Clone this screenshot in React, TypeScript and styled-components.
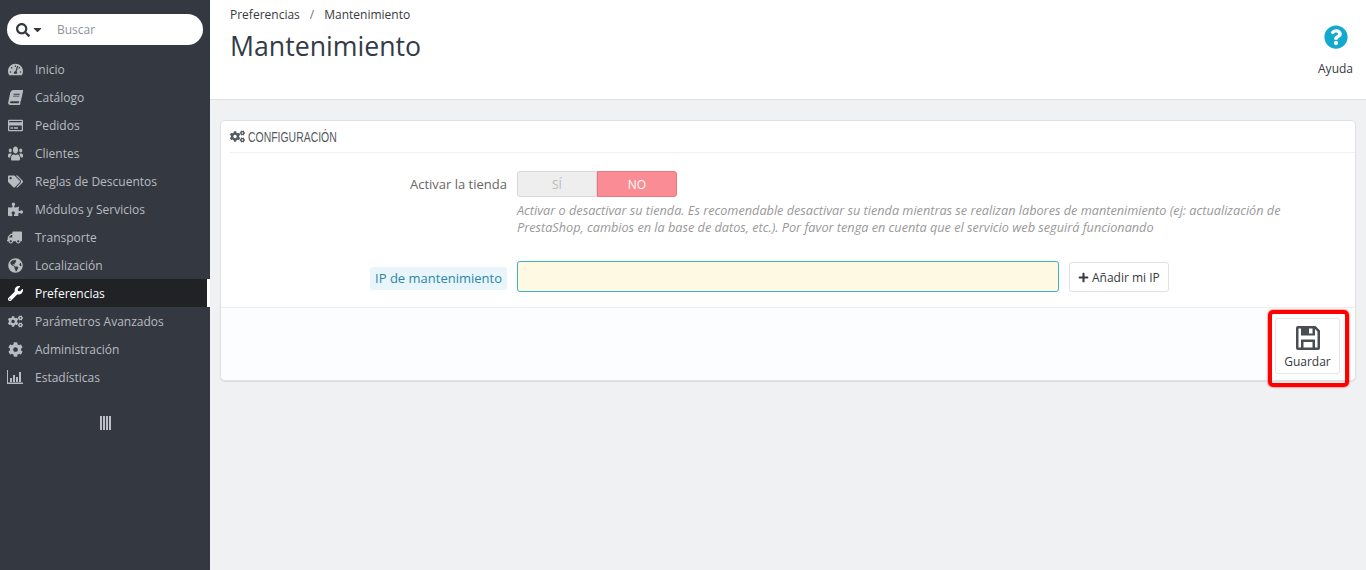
import { createGlobalStyle, styled } from "styled-components";
import type { IconType } from "react-icons";
import {
  FaBook,
  FaCaretDown,
  FaCog,
  FaCogs,
  FaGlobeAmericas,
  FaPlus,
  FaPuzzlePiece,
  FaQuestionCircle,
  FaRegCreditCard,
  FaSearch,
  FaTachometerAlt,
  FaTags,
  FaTruck,
  FaUsers,
  FaWrench,
} from "react-icons/fa";

const GlobalStyle = createGlobalStyle`
  html, body {
    margin: 0;
    height: 100%;
    background: #eff1f2;
    font-family: "Open Sans", "Liberation Sans", sans-serif;
    font-size: 12px;
    color: #363a41;
  }
  * { box-sizing: border-box; }
`;

function StatsIcon() {
  return (
    <svg width="16" height="14" viewBox="0 0 16 14" fill="currentColor">
      <path d="M0 0h1v12.6h16V14H0z" />
      <path d="M3 8h2v4H3zM6 5h2v7H6zM9 7h2v5H9zM12 2h2v10h-2z" />
    </svg>
  );
}

function SaveIcon() {
  return (
    <svg width="24" height="24" viewBox="0 0 24 24" fill="#4a4e54">
      <path
        fillRule="evenodd"
        d="M2 0h17.5L24 4.5V22a2 2 0 0 1-2 2H2a2 2 0 0 1-2-2V2a2 2 0 0 1 2-2zM2.5 2.5v19H5v-8h14v8h2.5V5.5L19 3v6.5H5v-7zM7.500 21.500h9V16h-9zM13 2.500V7.500h3.500V2.500z"
      />
    </svg>
  );
}

type Tilt = "skew" | "flip" | "tall";

const navItems: {
  label: string;
  icon: IconType;
  active?: boolean;
  tilt?: Tilt;
}[] = [
  { label: "Inicio", icon: FaTachometerAlt },
  { label: "Catálogo", icon: FaBook, tilt: "skew" },
  { label: "Pedidos", icon: FaRegCreditCard },
  { label: "Clientes", icon: FaUsers, tilt: "tall" },
  { label: "Reglas de Descuentos", icon: FaTags },
  { label: "Módulos y Servicios", icon: FaPuzzlePiece },
  { label: "Transporte", icon: FaTruck, tilt: "flip" },
  { label: "Localización", icon: FaGlobeAmericas },
  { label: "Preferencias", icon: FaWrench, active: true },
  { label: "Parámetros Avanzados", icon: FaCogs },
  { label: "Administración", icon: FaCog },
  { label: "Estadísticas", icon: StatsIcon as IconType },
];

const tiltTransforms: Record<Tilt, string> = {
  skew: "skewX(-12deg) scaleX(0.95)",
  flip: "scaleX(-1)",
  tall: "scaleY(1.35)",
};

export default function App() {
  return (
    <Page>
      <GlobalStyle />
      <Sidebar>
        <SearchPill>
          <SearchToggle>
            <FaSearch size={14} />
            <FaCaretDown size={13} />
          </SearchToggle>
          <SearchText>Buscar</SearchText>
        </SearchPill>
        <Nav>
          {navItems.map(({ label, icon: Icon, active, tilt }) => (
            <NavRow key={label} $active={active}>
              <NavIcon $tilt={tilt}>
                <Icon size={15} />
              </NavIcon>
              {label}
            </NavRow>
          ))}
        </Nav>
        <Collapse>
          <span />
          <span />
          <span />
          <span />
        </Collapse>
      </Sidebar>

      <Main>
        <Header>
          <div>
            <Breadcrumb>
              <span>Preferencias</span>
              <Slash>/</Slash>
              <span>Mantenimiento</span>
            </Breadcrumb>
            <Title>Mantenimiento</Title>
          </div>
          <Help>
            <FaQuestionCircle size={24} color="#12a9cf" />
            <span>Ayuda</span>
          </Help>
        </Header>

        <Panel>
          <PanelHeading>
            <FaCogs size={15} />
            <HeadingText>Configuración</HeadingText>
          </PanelHeading>

          <FormRow>
            <Label>Activar la tienda</Label>
            <Switch>
              <SwitchSide>SÍ</SwitchSide>
              <SwitchSide $on>NO</SwitchSide>
            </Switch>
          </FormRow>
          <Hint>
            Activar o desactivar su tienda. Es recomendable desactivar su tienda
            mientras se realizan labores de mantenimiento (ej: actualización de
            PrestaShop, cambios en la base de datos, etc.). Por favor tenga en
            cuenta que el servicio web seguirá funcionando
          </Hint>

          <IpRow>
            <Label $lower>
              <IpTag>IP de mantenimiento</IpTag>
            </Label>
            <IpInput />
            <AddButton>
              <FaPlus size={11} />
              Añadir mi IP
            </AddButton>
          </IpRow>

          <PanelFooter>
            <SaveButton>
              <SaveIcon />
              Guardar
            </SaveButton>
            <Highlight />
          </PanelFooter>
        </Panel>
      </Main>
    </Page>
  );
}

const Page = styled.div`
  display: flex;
  min-height: 570px;
`;

const Sidebar = styled.aside`
  width: 210px;
  flex: none;
  background: #343841;
  padding-top: 14px;
`;

const SearchPill = styled.div`
  display: flex;
  align-items: center;
  height: 31px;
  margin: 0 7px;
  padding-left: 9px;
  background: #fff;
  border-radius: 16px;
`;

const SearchToggle = styled.div`
  display: flex;
  align-items: center;
  gap: 1px;
  width: 41px;
  color: #363a41;
`;

const SearchText = styled.span`
  color: #8f9399;
`;

const Nav = styled.nav`
  margin-top: 10px;
`;

const NavRow = styled.div<{ $active?: boolean }>`
  display: flex;
  align-items: center;
  height: 28px;
  padding-left: 7px;
  color: ${(p) => (p.$active ? "#fff" : "#b8bcc0")};
  background: ${(p) => (p.$active ? "#202226" : "transparent")};
  border-right: 3px solid ${(p) => (p.$active ? "#fff" : "transparent")};
`;

const NavIcon = styled.span<{ $tilt?: Tilt }>`
  display: flex;
  justify-content: center;
  width: 16px;
  margin-right: 12px;
  transform: ${(p) => (p.$tilt ? tiltTransforms[p.$tilt] : "none")};
`;

const Collapse = styled.div`
  display: flex;
  justify-content: center;
  gap: 1px;
  margin-top: 25px;
  span {
    width: 2px;
    height: 14px;
    background: #bcc0c4;
  }
`;

const Main = styled.main`
  flex: 1;
  min-width: 0;
`;

const Header = styled.header`
  display: flex;
  justify-content: space-between;
  height: 100px;
  padding: 7px 13px 0 20px;
  background: #fff;
  border-bottom: 1px solid #dfe1e3;
`;

const Breadcrumb = styled.div`
  display: flex;
  line-height: 16px;
  color: #363a41;
`;

const Slash = styled.span`
  margin: 0 10px;
  color: #6c7177;
`;

const Title = styled.h1`
  margin: 5px 0 0;
  font-size: 26.7px;
  font-weight: 400;
  line-height: 36px;
  color: #313c47;
`;

const Help = styled.div`
  display: flex;
  flex-direction: column;
  align-items: center;
  gap: 11px;
  padding-top: 18px;
  color: #363a41;
`;

const Panel = styled.section`
  margin: 20px 10px 0;
  height: 261px;
  background: #fff;
  border: 1px solid #dfe1e3;
  border-radius: 5px;
  box-shadow: 0 1px 1px rgba(0, 0, 0, 0.08);
  display: flex;
  flex-direction: column;
`;

const PanelHeading = styled.div`
  display: flex;
  align-items: center;
  gap: 3px;
  height: 32px;
  margin: 0 0 0 9px;
  color: #555a60;
  border-bottom: 1px solid #f0f1f2;
`;

const HeadingText = styled.span`
  display: inline-block;
  font-family: "Liberation Sans", sans-serif;
  font-size: 14.5px;
  text-transform: uppercase;
  transform: scaleX(0.72);
  transform-origin: left center;
`;

const FormRow = styled.div`
  display: flex;
  align-items: center;
  gap: 10px;
  margin-top: 18px;
`;

const Label = styled.label<{ $lower?: boolean }>`
  flex: none;
  width: 286px;
  padding-top: ${(p) => (p.$lower ? "2px" : "0")};
  text-align: right;
  font-size: 13px;
  color: #666;
`;

const Switch = styled.div`
  display: flex;
  width: 160px;
  height: 26px;
`;

const SwitchSide = styled.div<{ $on?: boolean }>`
  flex: 1;
  display: flex;
  align-items: center;
  justify-content: center;
  color: ${(p) => (p.$on ? "#fff" : "#bbb")};
  background: ${(p) => (p.$on ? "#f98c94" : "#eeeeee")};
  border: 1px solid ${(p) => (p.$on ? "#e6787f" : "#d8d8d8")};
  border-radius: ${(p) => (p.$on ? "0 3px 3px 0" : "3px 0 0 3px")};
`;

const Hint = styled.p`
  margin: 5px 60px 0 296px;
  font-size: 12.7px;
  font-style: italic;
  line-height: 17px;
  color: #999;
`;

const IpRow = styled.div`
  display: flex;
  align-items: center;
  gap: 10px;
  margin-top: 25px;
`;

const IpTag = styled.span`
  padding: 2px 5px 3px;
  color: #2e86a8;
  background: #e8f5fa;
  border-radius: 3px;
`;

const IpInput = styled.div`
  width: 542px;
  height: 31px;
  background: #fef9e3;
  border: 1px solid #3fb0c6;
  border-radius: 3px;
`;

const AddButton = styled.button`
  display: flex;
  align-items: center;
  gap: 3px;
  width: 100px;
  height: 30px;
  margin-top: 1px;
  padding: 0 8px;
  background: #fff;
  border: 1px solid #dfe1e3;
  border-radius: 3px;
  font: inherit;
  color: #363a41;
`;

const PanelFooter = styled.div`
  position: relative;
  flex: 1;
  display: flex;
  justify-content: flex-end;
  margin-top: 15px;
  padding: 10px 15px 0 0;
  background: #fcfdfe;
  border-top: 1px solid #eeeff0;
  border-radius: 0 0 5px 5px;
`;

const SaveButton = styled.button`
  display: flex;
  flex-direction: column;
  align-items: center;
  justify-content: center;
  gap: 3px;
  width: 65px;
  height: 56px;
  padding: 4px 0 0;
  background: #fff;
  border: 1px solid #e6e7e8;
  border-radius: 3px;
  font: inherit;
  color: #363a41;
`;

const Highlight = styled.div`
  position: absolute;
  left: 1047px;
  top: 2px;
  width: 81px;
  height: 77px;
  border: 4px solid #f00;
  border-radius: 5px;
  box-shadow: 0 0 2px #f00;
  pointer-events: none;
`;
